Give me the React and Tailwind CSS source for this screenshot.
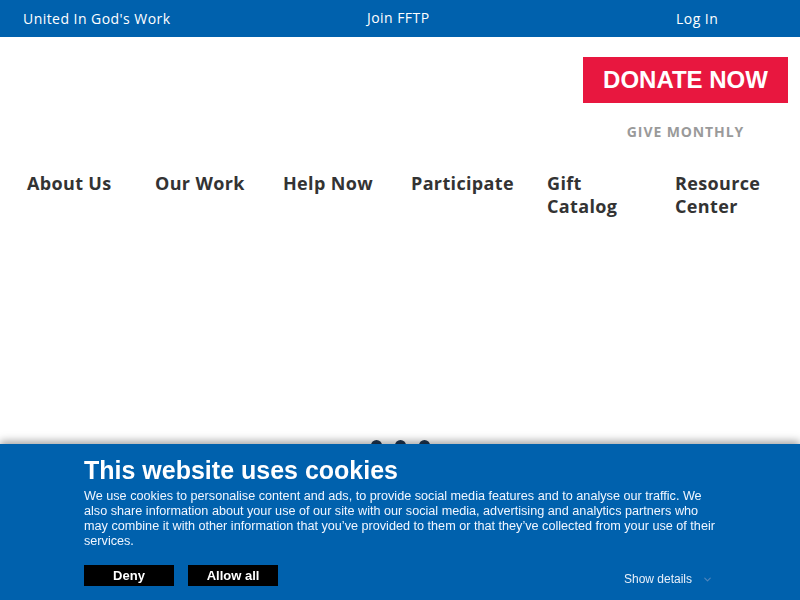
import React from "react";
import { ChevronDown } from "lucide-react";

const navItems = [
  { label: "About Us", w: "w-[128px]" },
  { label: "Our Work", w: "w-[128px]" },
  { label: "Help Now", w: "w-[128px]" },
  { label: "Participate", w: "w-[136px]" },
  { label: "Gift Catalog", w: "w-[128px] pr-[30px]" },
  { label: "Resource Center", w: "w-[100px]" },
];

const CookieBanner = () => (
  <div className="fixed bottom-0 left-0 right-0 h-[156px] bg-[#0061ad] shadow-[0_-3px_8px_rgba(0,0,0,0.35)] font-['Liberation_Sans',Arial,sans-serif] text-white">
    <div className="pl-[84px] pt-[11px] w-[722px]">
      <h2 className="text-[25px] leading-[30px] font-bold">
        This website uses cookies
      </h2>
      <p className="mt-[4px] text-[12.65px] leading-[15px] text-[#f0f6ff]">
        We use cookies to personalise content and ads, to provide social media
        features and to analyse our traffic. We also share information about
        your use of our site with our social media, advertising and analytics
        partners who may combine it with other information that you’ve provided
        to them or that they’ve collected from your use of their services.
      </p>
    </div>
    <div className="mt-[14px] pl-[84px] pr-[84px] flex items-center">
      <button className="w-[90px] h-[21px] bg-black text-[13px] font-bold">
        Deny
      </button>
      <button className="ml-[14px] w-[90px] h-[21px] bg-black text-[13px] font-bold">
        Allow all
      </button>
      <div className="ml-auto mt-[7px] flex items-center gap-[10px] text-[12px] text-[#e8f0fa] -translate-x-[3px]">
        <span>Show details</span>
        <ChevronDown className="w-[11px] h-[11px] text-[#4f86bd]" strokeWidth={2.5} />
      </div>
    </div>
  </div>
);

export default function App() {
  return (
    <div className="min-h-[600px] bg-white font-['Open_Sans',sans-serif]">
      {/* top bar */}
      <div className="h-[37px] bg-[#0061ad] grid grid-cols-[344px_309px_1fr] items-center pl-[23px] text-[14px] tracking-[0.45px] text-white">
        <span>United In God's Work</span>
        <span className="-mt-[2px]">Join FFTP</span>
        <span>Log In</span>
      </div>

      {/* donate */}
      <div className="flex justify-end pr-[12px] pt-[20px]">
        <div className="flex flex-col items-center">
          <button className="w-[205px] h-[46px] bg-[#e8173f] text-white text-[24px] font-bold font-['Liberation_Sans',Arial,sans-serif]">
            DONATE NOW
          </button>
          <span className="mt-[18px] text-[14px] font-bold tracking-[0.9px] text-[#9a9a9a]">
            GIVE MONTHLY
          </span>
        </div>
      </div>

      {/* nav */}
      <nav className="mt-[30px] pl-[27px] flex items-start">
        {navItems.map((item) => (
          <a
            key={item.label}
            className={`${item.w} shrink-0 text-[18px] leading-[23px] font-bold tracking-[0.35px] text-[#333333]`}
          >
            {item.label}
          </a>
        ))}
      </nav>

      {/* slider area */}
      <div className="h-[215px] relative">
        <div className="absolute bottom-[-18px] left-0 right-0 flex justify-center gap-[13px]">
          <span className="w-[11px] h-[11px] rounded-full bg-[#1e3550]" />
          <span className="w-[11px] h-[11px] rounded-full bg-[#1e3550]" />
          <span className="w-[11px] h-[11px] rounded-full bg-[#1e3550]" />
        </div>
      </div>

      <CookieBanner />
    </div>
  );
}
